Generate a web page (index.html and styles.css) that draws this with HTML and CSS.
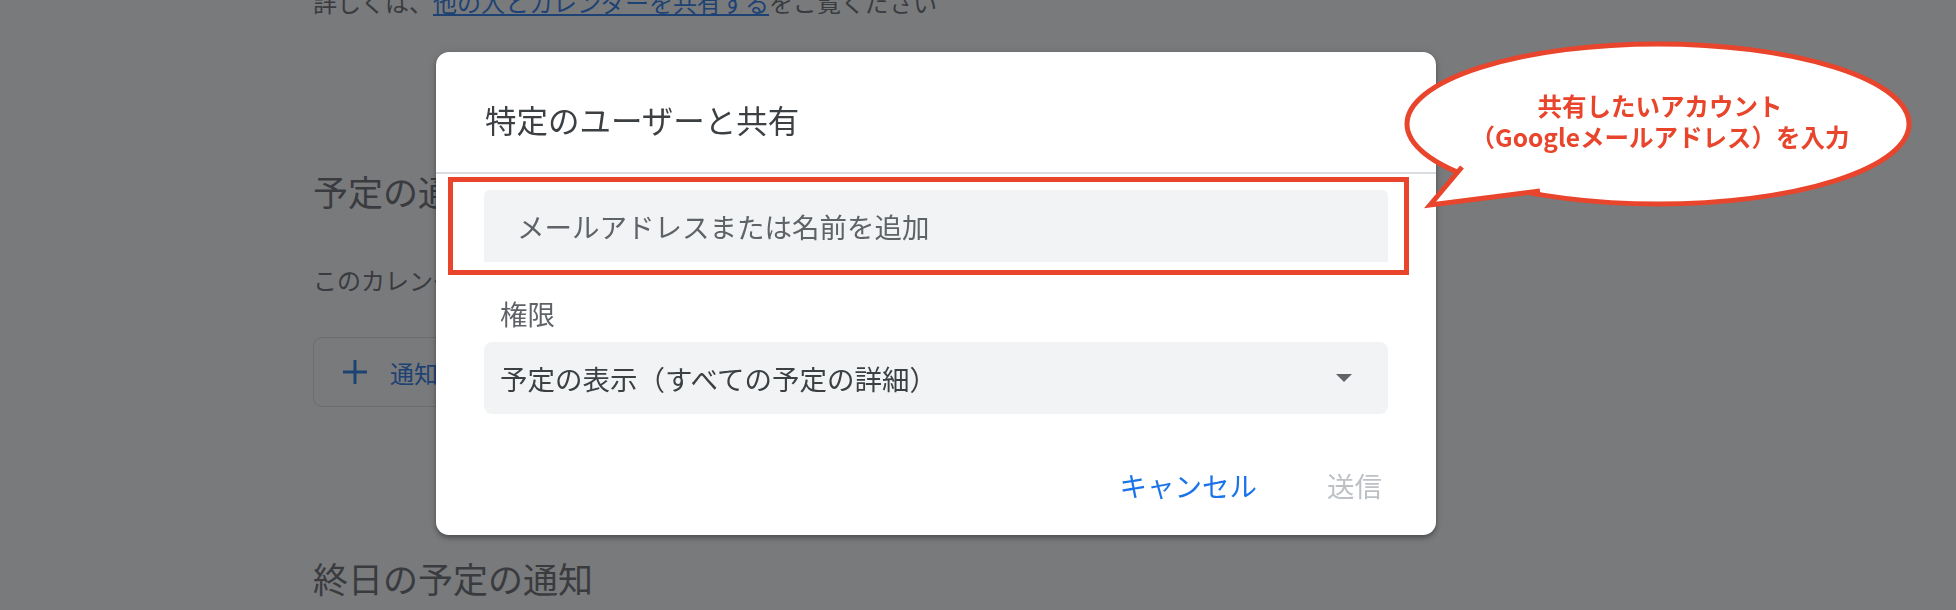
FILE: index.html
```html
<!DOCTYPE html>
<html>
<head>
    <title>特定のユーザーと共有</title>
    <link rel="stylesheet" href="styles.css">
</head>
<body>
    <!-- Settings page behind the dialog -->
    <main class="settings">
        <p class="intro">詳しくは、<a href="#">他の人とカレンダーを共有する</a>をご覧ください</p>

        <h2 class="section-title">予定の通知</h2>
        <p class="section-text">このカレンダーの予定に関する通知を受け取ります</p>
        <button class="add-button">
            <svg class="plus" width="24" height="24" viewBox="0 0 24 24">
                <path d="M12 0V24M0 12H24" stroke="currentColor" stroke-width="3"/>
            </svg>
            通知を追加
        </button>

        <h2 class="section-title bottom-title">終日の予定の通知</h2>
    </main>

    <!-- Share dialog -->
    <div class="scrim">
        <div class="dialog">
            <div class="dialog-header">
                <h1>特定のユーザーと共有</h1>
            </div>

            <div class="highlight">
                <input type="text" class="email-input" placeholder="メールアドレスまたは名前を追加">
            </div>

            <label class="field-label">権限</label>
            <div class="select">
                <span>予定の表示（すべての予定の詳細）</span>
                <svg class="arrow" width="16" height="8" viewBox="0 0 16 8">
                    <path d="M0 0H16L8 8Z" fill="#5f6368"/>
                </svg>
            </div>

            <div class="dialog-actions">
                <button class="text-button">キャンセル</button>
                <button class="text-button disabled">送信</button>
            </div>
        </div>
    </div>

    <!-- Annotation bubble -->
    <div class="callout">
        <svg class="bubble" width="520" height="175" viewBox="0 0 520 175">
            <ellipse cx="258" cy="86" rx="251" ry="80" fill="#fff" stroke="#e8452c" stroke-width="5"/>
            <path d="M62 129L30 167L140 153" fill="#fff" stroke="#e8452c" stroke-width="5"/>
        </svg>
        <p class="callout-text">共有したいアカウント<br>（Googleメールアドレス）を入力</p>
    </div>
</body>
</html>
```

FILE: styles.css
```css
body {
    margin: 0;
    width: 1956px;
    height: 610px;
    overflow: hidden;
    background-color: #fff;
    font-family: "Noto Sans CJK JP", "Noto Sans", sans-serif;
    color: #5f6368;
}

.settings {
    padding-left: 313px;
}

.intro {
    margin: -16px 0 0 0;
    font-size: 24px;
    line-height: 36px;
}

.intro a {
    color: #1a73e8;
}

.section-title {
    margin: 147px 0 0 0;
    font-size: 35px;
    line-height: 48px;
    font-weight: normal;
    color: #5f6368;
}

.section-text {
    margin: 47px 0 0 0;
    font-size: 24px;
    line-height: 36px;
}

.add-button {
    display: flex;
    align-items: center;
    gap: 23px;
    margin-top: 39px;
    height: 70px;
    padding: 0 30px 0 29px;
    border: 1px solid #dadce0;
    border-radius: 9px;
    background-color: #fff;
    font-family: inherit;
    font-size: 24px;
    color: #1a73e8;
}

.bottom-title {
    margin-top: 147px;
}

.scrim {
    position: fixed;
    top: 0;
    left: 0;
    right: 0;
    bottom: 0;
    display: flex;
    align-items: flex-start;
    padding: 52px 0 0 436px;
    background-color: rgba(32, 33, 36, 0.6);
}

.dialog {
    width: 1000px;
    background-color: #fff;
    border-radius: 13px;
    box-shadow: 0 4px 5px rgba(0, 0, 0, 0.14), 0 1px 10px rgba(0, 0, 0, 0.12), 0 2px 4px rgba(0, 0, 0, 0.2);
    padding-bottom: 32px;
}

.dialog-header {
    height: 122px;
    box-sizing: border-box;
    padding: 47px 0 0 49px;
    border-bottom: 2px solid #dadce0;
}

.dialog-header h1 {
    margin: 0;
    font-size: 31.5px;
    line-height: 40px;
    font-weight: normal;
    color: #3c4043;
}

.highlight {
    width: 961px;
    box-sizing: border-box;
    margin: 3px 0 0 12px;
    padding: 8px 16px 8px 31px;
    border: 5px solid #e8452c;
}

.email-input {
    display: block;
    width: 904px;
    height: 72px;
    box-sizing: border-box;
    padding: 0 0 0 33px;
    border: none;
    border-radius: 6px 6px 0 0;
    outline: none;
    background-color: #f1f3f4;
    font-family: inherit;
    font-size: 27.5px;
    color: #3c4043;
}

.email-input::placeholder {
    color: #5f6368;
}

.field-label {
    display: block;
    margin: 20px 0 0 64px;
    font-size: 27.5px;
    line-height: 36px;
    color: #5f6368;
}

.select {
    display: flex;
    align-items: center;
    justify-content: space-between;
    width: 904px;
    height: 72px;
    box-sizing: border-box;
    margin: 11px 0 0 48px;
    padding: 0 36px 0 16px;
    border-radius: 8px;
    background-color: #f1f3f4;
    font-size: 27.5px;
    color: #3c4043;
}

.dialog-actions {
    display: flex;
    justify-content: flex-end;
    gap: 70px;
    margin-top: 53px;
    padding-right: 54px;
}

.text-button {
    padding: 0;
    border: none;
    background: none;
    font-family: inherit;
    font-size: 27.5px;
    line-height: 36px;
    color: #1a73e8;
    cursor: pointer;
}

.text-button.disabled {
    color: #bdc1c6;
    cursor: default;
}

.callout {
    position: absolute;
    left: 1400px;
    top: 38px;
    width: 520px;
    height: 175px;
}

.bubble {
    position: absolute;
    left: 0;
    top: 0;
}

.callout-text {
    position: relative;
    margin: 0;
    padding-top: 52px;
    text-align: center;
    font-size: 24.5px;
    line-height: 31px;
    font-weight: bold;
    color: #e8452c;
}
```
